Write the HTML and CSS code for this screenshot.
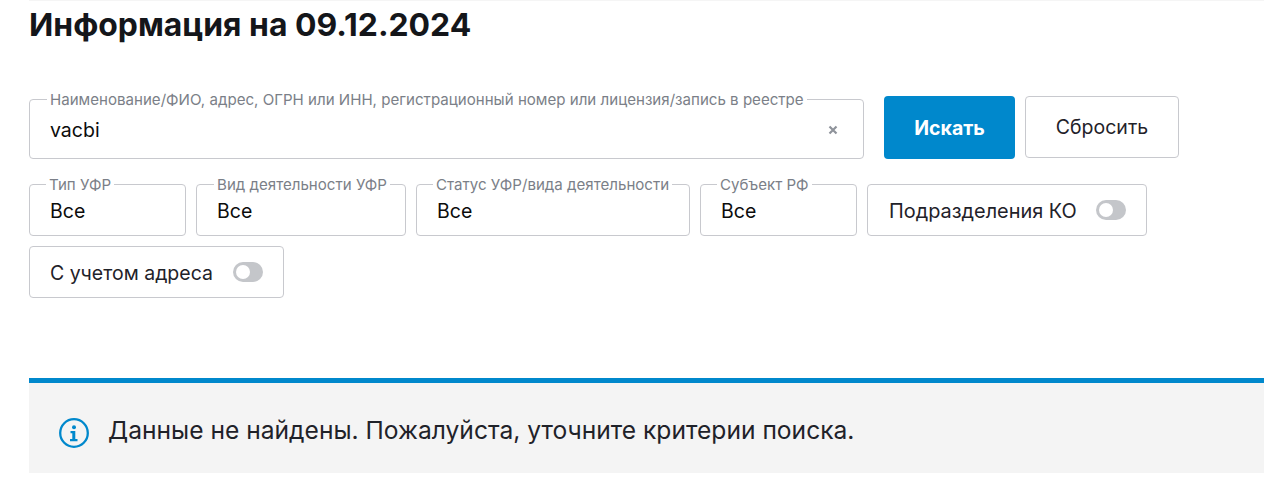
FILE: index.html
```html
<!DOCTYPE html>
<html lang="ru">
<head>
    <meta charset="UTF-8">
    <title>Информация</title>
    <link rel="stylesheet" href="styles.css">
</head>
<body>
    <div class="container">
        <h1>Информация на 09.12.2024</h1>

        <form class="search-row">
            <fieldset class="field field-search">
                <legend>Наименование/ФИО, адрес, ОГРН или ИНН, регистрационный номер или лицензия/запись в реестре</legend>
                <span class="value">vacbi</span>
                <svg class="clear" width="10" height="10" viewBox="0 0 10 10"><path d="M1.5 1.5l7 7M8.500 1.500l-7 7" stroke="#8f939b" stroke-width="2.200" fill="none"/></svg>
            </fieldset>
            <button type="button" class="btn btn-primary">Искать</button>
            <button type="button" class="btn btn-reset">Сбросить</button>
        </form>

        <div class="filters">
            <fieldset class="field field-type">
                <legend>Тип УФР</legend>
                <span class="value">Все</span>
            </fieldset>
            <fieldset class="field field-kind">
                <legend>Вид деятельности УФР</legend>
                <span class="value">Все</span>
            </fieldset>
            <fieldset class="field field-status">
                <legend>Статус УФР/вида деятельности</legend>
                <span class="value">Все</span>
            </fieldset>
            <fieldset class="field field-region">
                <legend>Субъект РФ</legend>
                <span class="value">Все</span>
            </fieldset>
            <div class="switch-box switch-ko">
                <span class="switch-label">Подразделения КО</span>
                <span class="switch"></span>
            </div>
            <div class="switch-box switch-address">
                <span class="switch-label">С учетом адреса</span>
                <span class="switch"></span>
            </div>
        </div>

        <div class="notice">
            <svg class="notice-icon" width="32" height="32" viewBox="0 0 32 32">
                <circle cx="16" cy="16" r="13.800" fill="none" stroke="#0088cc" stroke-width="2.300"/>
                <circle cx="16" cy="10.200" r="2" fill="#0088cc"/>
                <path d="M12.500 14h4.800v8h2.200v2.200h-7.500v-2.200h2.300v-5.800h-1.800z" fill="#0088cc"/>
            </svg>
            <span>Данные не найдены. Пожалуйста, уточните критерии поиска.</span>
        </div>
    </div>
</body>
</html>
```
FILE: styles.css
```css
body {
    margin: 0;
    font-family: Inter, "Noto Sans", sans-serif;
    color: #1f2229;
    background-color: white;
}

.container {
    margin-left: 29px;
    border-top: 1px solid #f5f5f5;
    height: 491px;
    overflow: hidden;
}

h1 {
    margin: 4px 0 0;
    font-size: 31.900px;
    line-height: 40px;
    font-weight: 700;
    color: #14161a;
}

.search-row {
    display: flex;
    align-items: flex-start;
    margin-top: 51px;
}

.field {
    box-sizing: border-box;
    margin: 0;
    padding: 0 20px;
    min-width: 0;
    border: 1px solid #c8c9ce;
    border-radius: 4px;
    display: flex;
    align-items: center;
}

.field legend {
    margin-left: -3px;
    padding: 2px 3px 0;
    font-size: 15.100px;
    line-height: 16px;
    color: #7b7f88;
    white-space: nowrap;
}

.value {
    font-size: 19.500px;
    color: #0c0c0c;
}

.field-search {
    width: 835px;
    height: 69px;
    margin-top: -6px;
    justify-content: space-between;
    padding-right: 25px;
    padding-bottom: 6px;
}

.clear {
    flex: none;
}

.btn {
    box-sizing: border-box;
    margin-top: 0;
    font-family: inherit;
    font-size: 19.500px;
    border-radius: 4px;
    cursor: pointer;
}

.btn-primary {
    width: 131px;
    height: 63px;
    margin-left: 20px;
    background-color: #0088cc;
    color: white;
    border: none;
    font-weight: 700;
}

.btn-reset {
    width: 154px;
    height: 62px;
    margin-left: 10px;
    background-color: white;
    color: #1f2229;
    border: 1px solid #c8c9ce;
}

.filters {
    display: flex;
    flex-wrap: wrap;
    gap: 10px;
    margin-top: 25px;
}

.filters .field {
    height: 61px;
    margin-top: -9px;
    padding-bottom: 7px;
}

.field-type { width: 157px; }
.field-kind { width: 210px; }
.field-status { width: 274px; }
.field-region { width: 157px; }

.field-type legend,
.field-status legend,
.field-region legend {
    margin-left: -4px;
}

.switch-box {
    box-sizing: border-box;
    height: 52px;
    padding: 0 20px;
    border: 1px solid #c8c9ce;
    border-radius: 4px;
    display: flex;
    align-items: center;
    justify-content: space-between;
    font-size: 19.500px;
}

.switch-label {
    padding-top: 2px;
}

.switch-ko { width: 280px; }
.switch-ko .switch-label {
    margin-left: 1px;
    font-size: 19.900px;
}
.switch-address { width: 255px; }

.switch {
    position: relative;
    width: 30px;
    height: 20px;
    border-radius: 10px;
    background-color: #c4c6ca;
}

.switch::after {
    content: "";
    position: absolute;
    left: 3px;
    top: 3px;
    width: 14px;
    height: 14px;
    border-radius: 50%;
    background-color: white;
}

.notice {
    display: flex;
    align-items: center;
    gap: 18px;
    height: 87px;
    margin-top: 80px;
    padding-left: 29px;
    padding-top: 3px;
    border-top: 5px solid #0088cc;
    background-color: #f4f4f4;
    font-size: 24.600px;
}

.notice-icon {
    flex: none;
    margin-top: 7px;
}
```
